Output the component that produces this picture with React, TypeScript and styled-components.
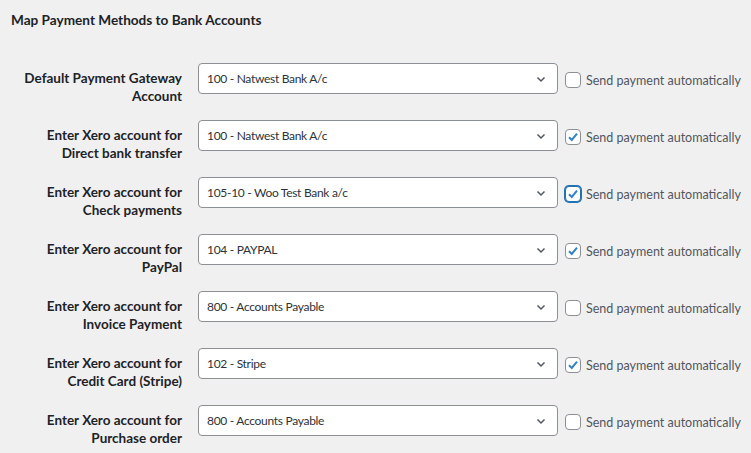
import styled, { createGlobalStyle } from "styled-components";

const GlobalStyle = createGlobalStyle`
  html, body {
    margin: 0;
    padding: 0;
    background: #f0f0f1;
  }
  body {
    font-family: Lato, "Noto Sans", sans-serif;
    color: #1d2327;
  }
`;

const Page = styled.div`
  width: 751px;
  height: 453px;
  overflow: hidden;
  padding: 10px 0 0 11px;
  box-sizing: border-box;
`;

const Title = styled.h2`
  margin: 0;
  font-size: 13.6px;
  font-weight: 700;
  line-height: 20px;
  color: #1d2327;
`;

const Table = styled.div`
  margin-top: 20px;
  display: flex;
  flex-direction: column;
`;

const Row = styled.div`
  display: grid;
  grid-template-columns: 171px 360px auto;
  column-gap: 16px;
  align-items: start;
  height: 57px;
  padding-top: 13px;
  box-sizing: border-box;
`;

const Label = styled.div`
  text-align: right;
  font-size: 13.5px;
  font-weight: 700;
  line-height: 18px;
  padding-top: 6px;
  color: #1d2327;
`;

const SelectBox = styled.div`
  height: 31px;
  box-sizing: border-box;
  background: #fff;
  border: 1px solid #8c8f94;
  border-radius: 4px;
  display: flex;
  align-items: center;
  justify-content: space-between;
  padding: 0 10px 0 8px;
  font-size: 12px;
  letter-spacing: -0.3px;
  color: #2c3338;
`;

const Check = styled.label`
  display: flex;
  align-items: center;
  gap: 5px;
  height: 31px;
  padding-top: 3px;
  box-sizing: border-box;
  margin-left: -9px;
  font-size: 12.5px;
  color: #50575e;
  white-space: nowrap;
`;

const Box = styled.span<{ $focus?: boolean }>`
  width: 16px;
  height: 16px;
  box-sizing: border-box;
  border: 1px solid ${(p) => (p.$focus ? "#2271b1" : "#8c8f94")};
  border-radius: 4px;
  background: #fff;
  display: flex;
  align-items: center;
  justify-content: center;
  box-shadow: ${(p) => (p.$focus ? "0 0 0 1px #2271b1" : "none")};
`;

const Chevron = () => (
  <svg width="12" height="12" viewBox="0 0 12 12">
    <path d="M2.5 4.5 L6 8 L9.5 4.5" fill="none" stroke="#50575e" strokeWidth="1.5" />
  </svg>
);

const Tick = () => (
  <svg width="14" height="14" viewBox="0 0 14 14">
    <path d="M3 7.2 L5.8 10 L11 3.6" fill="none" stroke="#3582c4" strokeWidth="2" />
  </svg>
);

const rows = [
  { label: ["Default Payment Gateway", "Account"], value: "100 - Natwest Bank A/c", checked: false },
  { label: ["Enter Xero account for", "Direct bank transfer"], value: "100 - Natwest Bank A/c", checked: true },
  { label: ["Enter Xero account for", "Check payments"], value: "105-10 - Woo Test Bank a/c", checked: true, focus: true },
  { label: ["Enter Xero account for", "PayPal"], value: "104 - PAYPAL", checked: true },
  { label: ["Enter Xero account for", "Invoice Payment"], value: "800 - Accounts Payable", checked: false },
  { label: ["Enter Xero account for", "Credit Card (Stripe)"], value: "102 - Stripe", checked: true },
  { label: ["Enter Xero account for", "Purchase order"], value: "800 - Accounts Payable", checked: false },
];

export default function App() {
  return (
    <>
      <GlobalStyle />
      <Page>
        <Title>Map Payment Methods to Bank Accounts</Title>
        <Table>
          {rows.map((r, i) => (
            <Row key={i}>
              <Label>
                {r.label[0]}
                <br />
                {r.label[1]}
              </Label>
              <SelectBox>
                <span>{r.value}</span>
                <Chevron />
              </SelectBox>
              <Check>
                <Box $focus={r.focus}>{r.checked && <Tick />}</Box>
                Send payment automatically
              </Check>
            </Row>
          ))}
        </Table>
      </Page>
    </>
  );
}
